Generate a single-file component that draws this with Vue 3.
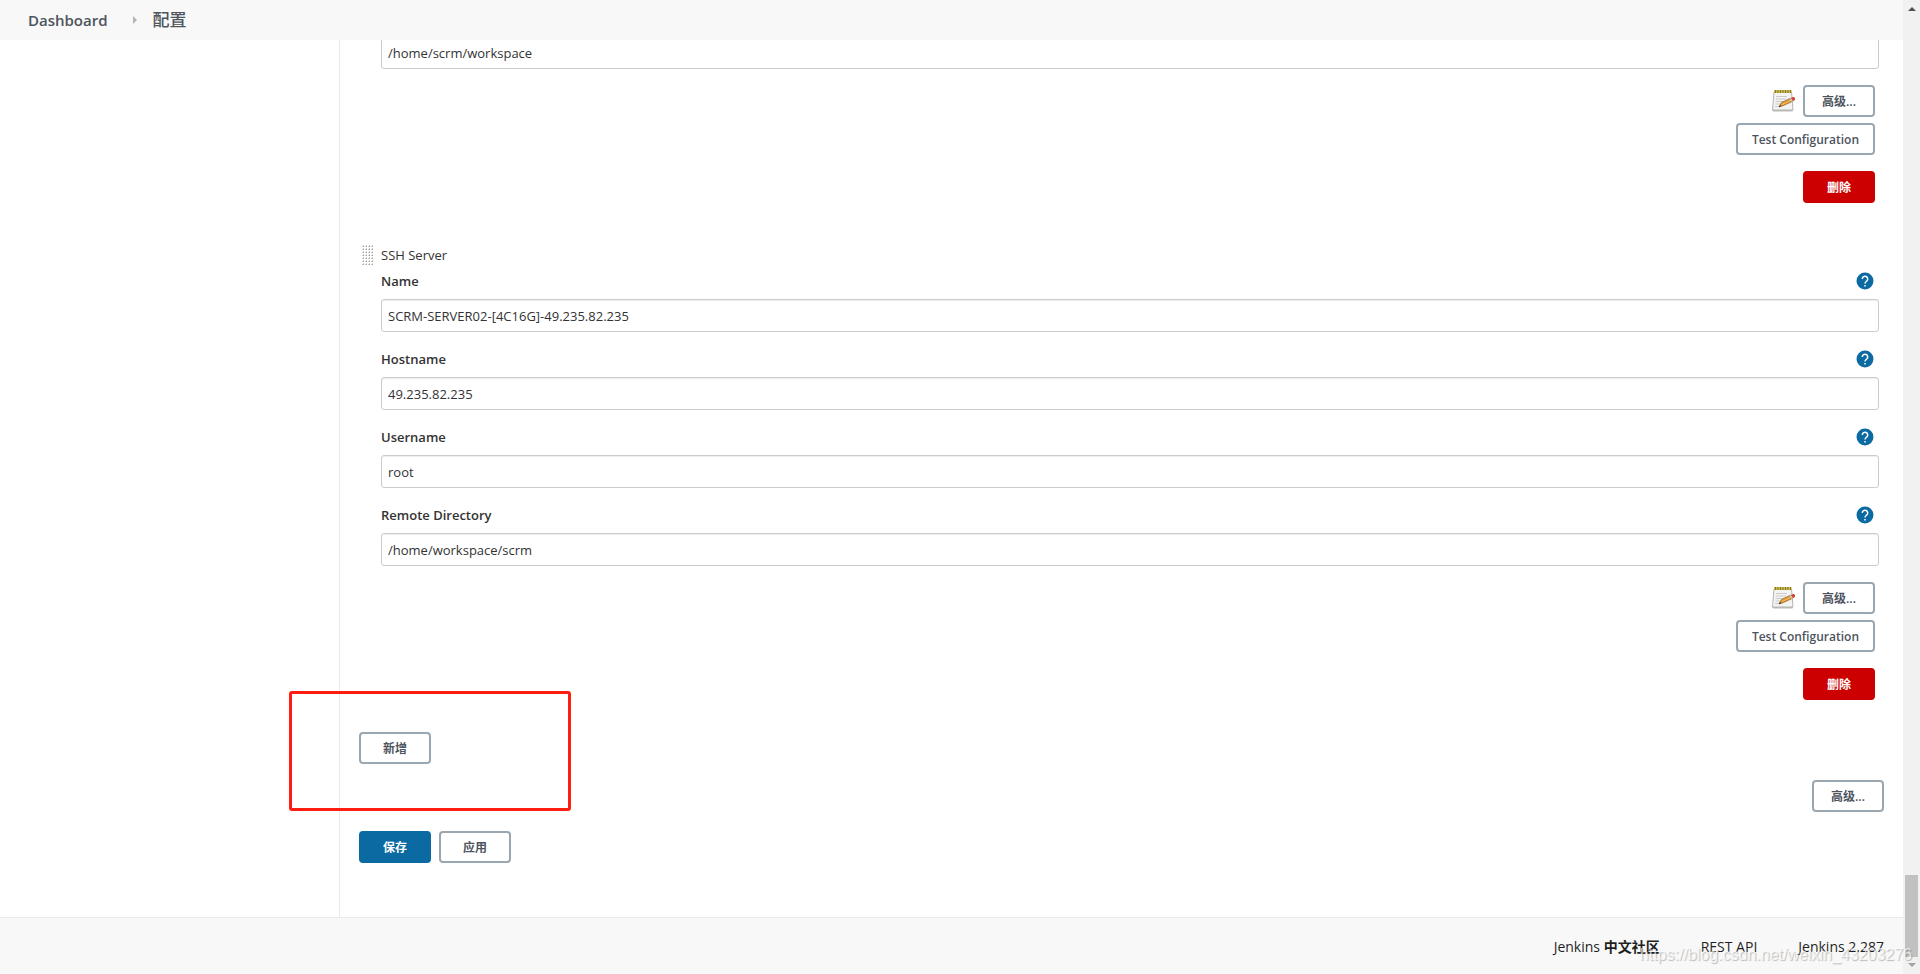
<script setup>
import { ref } from 'vue'

const workspace = ref('/home/scrm/workspace')
const fields = ref([
  { id: 'name', label: 'Name', value: 'SCRM-SERVER02-[4C16G]-49.235.82.235' },
  { id: 'hostname', label: 'Hostname', value: '49.235.82.235' },
  { id: 'username', label: 'Username', value: 'root' },
  { id: 'remote', label: 'Remote Directory', value: '/home/workspace/scrm' }
])
const servers = [
  { id: 'server-1', title: '', fields: [] },
  { id: 'server-2', title: 'SSH Server', fields: fields.value }
]
</script>

<template>
  <div class="window">
    <div class="page">
      <header class="breadcrumbs">
        <a href="#" class="crumb">Dashboard</a>
        <svg class="crumb-arrow" width="4" height="8" viewBox="0 0 4 8" aria-hidden="true"><path d="M0 0l4 4-4 4z" fill="#b5b5b5" /></svg>
        <a href="#" class="crumb current">配置</a>
      </header>

      <div class="body">
        <aside class="side"></aside>
        <main class="content">
          <section v-for="server in servers" :key="server.id" class="server">
            <div v-if="server.title" class="server-head">
              <svg class="handle" width="11" height="20" viewBox="0 0 11 20" aria-hidden="true">
                <defs>
                  <pattern id="grip" width="3" height="3" patternUnits="userSpaceOnUse">
                    <path d="M0 1h1v1H0zM1 0h1v1H1z" fill="#cfcfcb" />
                    <path d="M1 1h1v1H1z" fill="#a3a3a0" />
                  </pattern>
                </defs>
                <rect width="11" height="20" fill="url(#grip)" />
              </svg>
              <span>{{ server.title }}</span>
            </div>
            <div v-else class="field">
              <input v-model="workspace" class="text" type="text" aria-label="Remote Directory" />
            </div>

            <div v-for="f in server.fields" :key="f.id" class="field">
              <div class="label-row">
                <label :for="f.id">{{ f.label }}</label>
                <button type="button" class="help" :aria-label="'Help for ' + f.label">
                  <svg width="18" height="18" viewBox="0 0 24 24" aria-hidden="true">
                    <circle cx="12" cy="12" r="11.3" fill="#0b6aa2" />
                    <path d="M8.4 9.3a3.6 3.6 0 1 1 5.9 2.7c-1.3 1.1-2.3 1.7-2.3 3.4" fill="none" stroke="#fff" stroke-width="2" />
                    <path d="M11 17.2h2v2.1h-2z" fill="#fff" />
                  </svg>
                </button>
              </div>
              <input :id="f.id" v-model="f.value" class="text" type="text" />
            </div>

            <div class="actions">
              <div class="action-line">
                <svg width="24" height="24" viewBox="0 0 24 24" aria-hidden="true">
                  <path d="M1 20.5h21l-.5 2H2z" fill="#bdbdbd" />
                  <path d="M3 3h17.500l1.500 18H1.500z" fill="#f3f3f2" stroke="#b4b4b2" />
                  <path d="M3 1h17.500v3H3z" fill="#c9b84c" />
                  <path d="M4.500 1v3M7 1v3M9.500 1v3M12 1v3M14.500 1v3M17 1v3M19.500 1v3" stroke="#897923" />
                  <path d="M5 7.500h11M5 10h10M4.500 12.500h8M4.500 15h5M4 17.500h6" stroke="#cacaca" />
                  <path d="M8 18l2.500-4.500L20 9l2.200 3-9.700 4.500z" fill="#e39a31" stroke="#8c5b20" stroke-width=".7" />
                  <path d="M11 15.500l9.500-4.500" stroke="#f7c66c" stroke-width=".8" />
                  <path d="M8 18l1-2 1.300 1.300z" fill="#333" />
                  <path d="M18.500 9.700l1.500-.7 2.200 3-1.500.7z" fill="#c9c9cd" />
                  <path d="M20 9l2.200-1c1.700-.2 2.400 2 1.300 3.200L22.200 12z" fill="#cf4037" />
                </svg>
                <button type="button" class="btn">高级...</button>
              </div>
              <button type="button" class="btn">Test Configuration</button>
              <button type="button" class="btn danger">删除</button>
            </div>
          </section>

          <div class="add">
            <button type="button" class="btn">新增</button>
            <div class="highlight"></div>
          </div>
          <div class="advanced">
            <button type="button" class="btn">高级...</button>
          </div>
          <div class="submit">
            <button type="submit" class="btn primary">保存</button>
            <button type="button" class="btn">应用</button>
          </div>
        </main>
      </div>

      <footer class="footer">
        <a href="#">Jenkins <b>中文社区</b></a>
        <a href="#">REST API</a>
        <a href="#">Jenkins 2.287</a>
      </footer>
    </div>

    <div class="scrollbar" aria-hidden="true">
      <svg width="8" height="4" viewBox="0 0 8 4"><path d="M0 4l4-4 4 4z" fill="#505050" /></svg>
      <div class="thumb"></div>
      <svg width="8" height="4" viewBox="0 0 8 4"><path d="M0 0l4 4 4-4z" fill="#a3a3a3" /></svg>
    </div>
    <div class="watermark">https://blog.csdn.net/weixin_43203276</div>
  </div>
</template>

<style>
body {
  margin: 0;
  background: #fff;
}
</style>

<style scoped>
.window {
  position: relative;
  display: flex;
  min-height: 100vh;
  overflow: hidden;
  font-family: "Open Sans", "Noto Sans CJK SC", sans-serif;
  font-size: 13px;
  line-height: 20px;
  color: #333;
}
.window *,
.window {
  box-sizing: border-box;
}
.page {
  flex: 1;
  min-width: 0;
  display: flex;
  flex-direction: column;
}
a {
  color: inherit;
  text-decoration: none;
}
.breadcrumbs {
  position: relative;
  z-index: 1;
  height: 40px;
  display: flex;
  align-items: center;
  padding: 0 28px;
  background: #f8f8f8;
  color: #4d545d;
}
.crumb {
  font-size: 15px;
  font-weight: 600;
}
.crumb-arrow {
  margin: 0 16px 0 25px;
}
.current {
  font-size: 17px;
  font-weight: 500;
}
.body {
  flex: 1;
  display: flex;
}
.side {
  width: 340px;
  flex: none;
  border-right: 1px solid #eaeaea;
}
.content {
  flex: 1;
  min-width: 0;
  margin-top: -4px;
  padding: 0 19px 32px;
}
.server {
  padding: 0 5px 0 22px;
}
.server + .server {
  padding-top: 42px;
}
.server-head {
  display: flex;
  align-items: center;
  gap: 8px;
  margin: 0 0 5px -19px;
}
.field {
  margin-bottom: 16px;
}
.label-row {
  display: flex;
  align-items: center;
  justify-content: space-between;
  height: 22px;
  margin-bottom: 7px;
  padding-right: 5px;
  font-weight: 600;
}
.help {
  display: flex;
  padding: 0;
  border: 0;
  background: none;
}
.text {
  display: block;
  width: 100%;
  height: 33px;
  padding: 0 6px;
  border: 1px solid #ccc;
  border-radius: 3px;
  background: #fff;
  box-shadow: inset 0 1px 1px rgba(0, 0, 0, 0.075);
  font: inherit;
  color: #333;
}
.actions {
  display: flex;
  flex-direction: column;
  align-items: flex-end;
  gap: 6px;
  padding-right: 4px;
}
.action-line {
  display: flex;
  align-items: center;
  gap: 8px;
}
.btn {
  min-width: 72px;
  height: 32px;
  padding: 2px 14px 0;
  border: 2px solid #9aa6b0;
  border-radius: 4px;
  background: #fff;
  color: #4d545d;
  font-family: inherit;
  font-size: 12px;
  font-weight: 600;
  line-height: 20px;
}
.danger {
  margin-top: 10px;
  border-color: #c00;
  background: #c00;
  color: #fff;
}
.primary {
  border-color: #0b6aa2;
  background: #0b6aa2;
  color: #fff;
}
.add {
  position: relative;
  display: flex;
  margin: 32px 0 16px;
}
.highlight {
  position: absolute;
  left: -70px;
  top: -41px;
  width: 282px;
  height: 120px;
  border: 3px solid #ff1c10;
  border-radius: 3px;
  pointer-events: none;
}
.advanced {
  display: flex;
  justify-content: flex-end;
  margin-bottom: 19px;
}
.submit {
  display: flex;
  gap: 8px;
}
.footer {
  display: flex;
  justify-content: flex-end;
  align-items: center;
  gap: 41px;
  height: 57px;
  padding: 2px 19px 0;
  border-top: 1px solid #eaeaea;
  background: #f8f8f8;
  color: #1f1f1f;
  font-size: 14px;
}
.footer b {
  font-weight: 700;
}
.scrollbar {
  display: flex;
  flex-direction: column;
  align-items: center;
  justify-content: space-between;
  width: 17px;
  flex: none;
  padding: 7px 2px;
  background: #f1f1f1;
}
.thumb {
  width: 100%;
  height: 82px;
  margin: auto 0 6px;
  background: #c1c1c1;
}
.watermark {
  position: absolute;
  right: 8px;
  bottom: 9px;
  font-family: "Liberation Sans", sans-serif;
  font-size: 16px;
  color: rgba(255, 255, 255, 0.7);
  text-shadow: 1px 1px 1px rgba(0, 0, 0, 0.25);
  pointer-events: none;
}
</style>
